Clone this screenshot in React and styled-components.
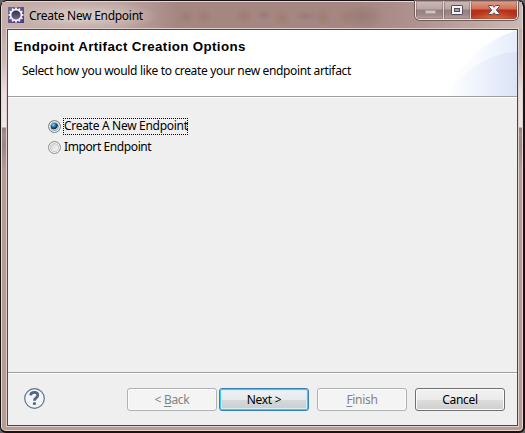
import React, { useState } from "react";
import styled, { createGlobalStyle, css } from "styled-components";

const GlobalStyle = createGlobalStyle`
  * { box-sizing: border-box; }
  body { margin: 0; background: #666; overflow: hidden; }
`;

const Window = styled.div`
  width: 525px;
  height: 433px;
  padding: 0 5px 5px 6px;
  display: flex;
  flex-direction: column;
  border: 1px solid #191315;
  border-right-width: 2px;
  border-bottom-width: 2px;
  border-radius: 7px 7px 6px 6px;
  box-shadow: inset 0 0 0 1px #e5d6d4;
  font-family: "Noto Sans", "Open Sans", sans-serif;
  font-size: 12px;
  color: #000;
  background: linear-gradient(
    #a88983 0, #ab8d88 15px, #c0aaa5 27px, #cdbbb8 60px, #e8dedd 90px,
    #eee7e6 126px, #91817f 127px, #a48e8c 133px, #9e8688 145px,
    #b79c96 170px, #b79c96 100%
  );
`;

const TitleBar = styled.header`
  flex: 0 0 27px;
  margin: 1px -4px 0 -5px;
  padding: 0 0 0 6px;
  display: flex;
  align-items: flex-start;
  background:
    radial-gradient(ellipse 78px 15px at 79px 14px, #d8c9c5 20%, #cbb8b4aa 65%, transparent 100%),
    radial-gradient(ellipse 9px 8px at 184px 15px, #8c706766, transparent),
    radial-gradient(ellipse 9px 8px at 202px 15px, #92715e66, transparent),
    radial-gradient(ellipse 10px 8px at 242px 14px, #92715e77, transparent),
    radial-gradient(ellipse 8px 6px at 262px 13px, #806c7066, transparent),
    radial-gradient(ellipse 9px 9px at 280px 16px, #94765c77, transparent),
    radial-gradient(ellipse 12px 6px at 304px 14px, #806c7066, transparent),
    radial-gradient(ellipse 9px 9px at 321px 15px, #94765c77, transparent),
    radial-gradient(ellipse 8px 9px at 344px 15px, #94765c66, transparent),
    radial-gradient(ellipse 22px 12px at 362px 14px, #8e716b88, transparent),
    linear-gradient(90deg, #c6b0ac 0, #bda5a0 120px, #a58782 175px, #a58782 360px, #b09490 420px, #cbb9b5 100%);
`;

const AppIcon = styled.svg`
  width: 16px;
  height: 16px;
  margin-top: 5px;
`;

const Title = styled.h1`
  margin: 5px auto 0 5px;
  font-size: 12px;
  line-height: 17px;
  font-weight: 400;
  letter-spacing: -0.28px;
  white-space: pre;
`;

const CaptionGroup = styled.div`
  width: 103px;
  height: 19px;
  margin: -1px 4px 0 0;
  display: flex;
  border: 1px solid #f2e6e3;
  border-top: 0;
  border-radius: 0 0 5px 5px;
  box-shadow: 0 0 0 1px #705a58;
  overflow: hidden;
`;

const CaptionButton = styled.button`
  flex: 0 0 ${(p) => p.$width}px;
  padding: 0;
  display: flex;
  align-items: center;
  justify-content: center;
  border: 0;
  border-left: ${(p) => (p.$divided ? "1px solid #e7d7d4" : "0")};
  box-shadow: inset 0 0 0 1px #5f4b4c55;
  background: ${(p) =>
    p.$danger
      ? "radial-gradient(ellipse 24px 9px at 50% 100%, #e1663b, transparent), linear-gradient(#e0a18f 0, #d16c55 8px, #b4301a 9px, #b5321d 14px, #bd4c32 100%)"
      : "linear-gradient(#cbbcb9 0, #b9a5a3 8px, #95807f 9px, #a08988 14px, #b9a29f 100%)"};
`;

const Content = styled.main`
  flex: 1;
  margin: 0;
  display: flex;
  flex-direction: column;
  border: 1px solid #554545;
  box-shadow: 0 0 0 1px #decfcc;
  background: #efefef;
`;

const Banner = styled.section`
  flex: 0 0 67px;
  display: flex;
  justify-content: space-between;
  background: #fff;
  border-bottom: 1px solid #a0a0a0;
  box-shadow: 0 1px #fff;
`;

const BannerText = styled.div`
  padding: 9px 0 0 6px;
  white-space: pre;
`;

const Heading = styled.h2`
  margin: 0;
  font: bold 13.33px/16px "Liberation Sans", Arial, sans-serif;
  letter-spacing: 0.36px;
`;

const Description = styled.p`
  margin: 7px 0 0 8px;
  line-height: 17px;
  letter-spacing: -0.34px;
`;

const BannerArt = styled.svg`
  width: 80px;
  height: 66px;
`;

const Options = styled.section`
  flex: 1;
  display: flex;
  flex-direction: column;
  align-items: flex-start;
  gap: 4px;
  padding: 21px 0 0 40px;
`;

const Option = styled.label`
  height: 17px;
  display: flex;
  align-items: center;
  gap: 2px;
`;

const Radio = styled.input`
  appearance: none;
  width: 13px;
  height: 13px;
  margin: 0;
  outline: none;
  border: 1px solid #8e8f8f;
  border-radius: 50%;
  box-shadow: inset 0 0 0 1px #f4f4f4, inset 0 0 0 2px #c8cacc;
  background: linear-gradient(135deg, #c5c9ce, #f5f5f5 75%);
  ${(p) =>
    p.checked &&
    css`
      border-color: #7d8489;
      box-shadow: inset 0 0 0 1px #f1f4f6, inset 0 0 0 2px #a7b1b8;
      background: radial-gradient(circle at 4.5px 4px, #9ee5f8 0, #2c91bd 1.5px, #12496e 3px, #12334d 4px, #b3c4d0 4.6px);
    `}
`;

const OptionText = styled.span`
  height: 17px;
  padding: 0 0 0 1px;
  line-height: 16px;
  white-space: pre;
  letter-spacing: ${(p) => p.$spacing}px;
  outline: ${(p) => (p.$focused ? "1px dotted #000" : "none")};
  outline-offset: -1px;
`;

const Footer = styled.footer`
  flex: 0 0 53px;
  display: flex;
  align-items: flex-start;
  padding: 15px 12px 0 16px;
  border-top: 1px solid #a0a0a0;
  box-shadow: inset 0 1px #fff;
`;

const HelpButton = styled.button`
  width: 21px;
  height: 21px;
  margin: 0 auto 0 0;
  padding: 0;
  border: 0;
  background: none;
  svg { display: block; }
`;

const Button = styled.button`
  width: 90px;
  height: 23px;
  margin-left: ${(p) => p.$gap || 0}px;
  padding: 0 0 1px;
  border: 1px solid #707070;
  border-radius: 3px;
  box-shadow: inset 0 0 0 1px #fbfbfb;
  background: linear-gradient(#f2f2f2 0, #ebebeb 50%, #dddddd 51%, #cfcfcf 100%);
  font: 12px/19px "Noto Sans", "Open Sans", sans-serif;
  letter-spacing: -0.3px;
  color: #000;
  ${(p) =>
    p.$primary &&
    css`
      border-color: #3c7fb1;
      box-shadow: inset 0 0 0 1px #43c8f2, inset 0 0 0 2px #d5edf5;
      background: linear-gradient(#f0f2f2 0, #e8eaea 50%, #d6dada 51%, #c7cdcf 100%);
    `}
  &:disabled {
    border-color: #adb2b5;
    box-shadow: inset 0 0 0 1px #fbfbfb;
    background: #f4f4f4;
    color: #838383;
  }
  u { text-underline-offset: 2px; text-decoration-thickness: 1px; text-decoration-skip-ink: none; }
`;

const GEAR_TEETH = Array.from({ length: 12 }, (_, i) => i * 30);

function GearIcon() {
  return (
    <AppIcon viewBox="0 0 16 16">
      <defs>
        <linearGradient id="gearBg" x1="0" y1="0" x2="1" y2="1">
          <stop offset="0" stopColor="#746a91" />
          <stop offset="1" stopColor="#4c378a" />
        </linearGradient>
        <linearGradient id="gearCore" x1="0" y1="0" x2="0" y2="1">
          <stop offset="0" stopColor="#2c2944" />
          <stop offset="1" stopColor="#74719b" />
        </linearGradient>
      </defs>
      <rect width="16" height="16" fill="url(#gearBg)" />
      {GEAR_TEETH.map((angle) => (
        <rect key={angle} x="7.1" y="0.5" width="1.8" height="3" fill="#f1efed" transform={`rotate(${angle} 8 8)`} />
      ))}
      <circle cx="8" cy="8" r="5.4" fill="url(#gearCore)" stroke="#f4f1ee" strokeWidth="1.6" />
    </AppIcon>
  );
}

function HelpIcon() {
  return (
    <svg width="21" height="21" viewBox="0 0 21 21" fill="none">
      <circle cx="10.5" cy="10.5" r="9.8" fill="#f4f5f7" stroke="#5e7391" strokeWidth="1.2" />
      <path d="M6.6 7.3C6.8 5 8.3 4.4 10.3 4.4c2.2 0 3.5 1.1 3.5 2.8 0 2.7-3.4 2.7-3.4 5.5" stroke="#526589" strokeWidth="2.7" />
      <rect x="8.9" y="14.2" width="3" height="2.7" rx="0.8" fill="#526589" />
    </svg>
  );
}

function BannerWaves() {
  return (
    <BannerArt viewBox="0 0 80 66">
      <defs>
        <linearGradient id="waveBack" x1="0" x2="1">
          <stop offset="0" stopColor="#fff" />
          <stop offset="0.5" stopColor="#f8fafd" />
          <stop offset="1" stopColor="#eef2fb" />
        </linearGradient>
        <linearGradient id="waveMid" x1="0" x2="1">
          <stop offset="0" stopColor="#fafcff" />
          <stop offset="1" stopColor="#e5ecfa" />
        </linearGradient>
        <linearGradient id="waveFront" x1="0" x2="1">
          <stop offset="0" stopColor="#fff" />
          <stop offset="0.5" stopColor="#edf2fc" />
          <stop offset="1" stopColor="#dbe3f6" />
        </linearGradient>
      </defs>
      <path d="M8 66C20 42 42 9 80 1v65z" fill="url(#waveBack)" />
      <path d="M36 38C48 17 59 5 80 1v65H36z" fill="url(#waveMid)" />
      <path d="M8 66C25 42 51 23 80 22v44z" fill="url(#waveFront)" />
    </BannerArt>
  );
}

function CaptionButtons() {
  return (
    <CaptionGroup>
      <CaptionButton $width={27} aria-label="Minimize">
        <svg width="12" height="10" viewBox="0 0 12 10">
          <rect x="1.5" y="5.5" width="10" height="3" fill="#cfc7c4" stroke="#aa9c9b" />
        </svg>
      </CaptionButton>
      <CaptionButton $width={27} $divided aria-label="Maximize">
        <svg width="12" height="10" viewBox="0 0 12 10">
          <rect x="0.5" y="0.5" width="11" height="9" rx="0.6" fill="#f4f2f2" stroke="#534b5e" />
          <rect x="3.5" y="3.5" width="5" height="3" fill="#ae9b99" stroke="#534b5e" />
        </svg>
      </CaptionButton>
      <CaptionButton $width={47} $divided $danger aria-label="Close">
        <svg width="12" height="10" viewBox="0 0 12 10">
          <path d="M.6.5h3.7L6 2.3 7.7.5h3.7v1L8.3 5l3.1 3.5v1H7.7L6 7.7 4.3 9.5H.6v-1L3.7 5 .6 1.5z" fill="#f5f3f3" stroke="#5b4b5a" />
        </svg>
      </CaptionButton>
    </CaptionGroup>
  );
}

export default function App() {
  const [choice, setChoice] = useState("create");
  return (
    <>
      <GlobalStyle />
      <Window>
        <TitleBar>
          <GearIcon />
          <Title>Create New Endpoint</Title>
          <CaptionButtons />
        </TitleBar>
        <Content>
          <Banner>
            <BannerText>
              <Heading>Endpoint Artifact Creation Options</Heading>
              <Description>Select how you would like to create your new endpoint artifact</Description>
            </BannerText>
            <BannerWaves />
          </Banner>
          <Options>
            <Option>
              <Radio type="radio" name="endpoint" checked={choice === "create"} onChange={() => setChoice("create")} />
              <OptionText $focused={choice === "create"} $spacing={-0.3}>Create A New Endpoint</OptionText>
            </Option>
            <Option>
              <Radio type="radio" name="endpoint" checked={choice === "import"} onChange={() => setChoice("import")} />
              <OptionText $focused={choice === "import"} $spacing={-0.4}>Import Endpoint</OptionText>
            </Option>
          </Options>
          <Footer>
            <HelpButton aria-label="Help"><HelpIcon /></HelpButton>
            <Button disabled>&lt; <u>B</u>ack</Button>
            <Button $primary $gap={2}>Next &gt;</Button>
            <Button disabled $gap={8}><u>F</u>inish</Button>
            <Button $gap={8}>Cancel</Button>
          </Footer>
        </Content>
      </Window>
    </>
  );
}
